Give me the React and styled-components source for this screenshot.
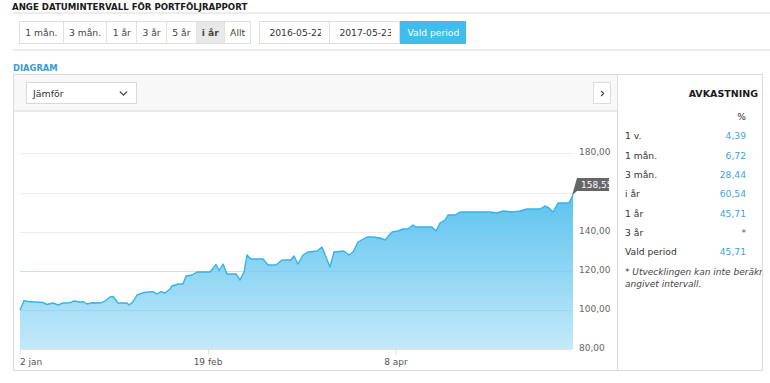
import React from "react";
import styled, { createGlobalStyle } from "styled-components";
import { ChevronDown, ChevronRight } from "lucide-react";

const Global = createGlobalStyle`
  html, body { margin: 0; padding: 0; background: #fff; }
  body { font-family: "DejaVu Sans", Verdana, sans-serif; color: #333; }
  * { box-sizing: border-box; }
`;

const Page = styled.div`
  width: 770px;
  height: 383px;
  overflow: hidden;
  padding-left: 12px;
`;

const Title = styled.h1`
  margin: 0;
  height: 12px;
  line-height: 14px;
  font-size: 8.6px;
  font-weight: bold;
  color: #1a1a1a;
  white-space: nowrap;
`;

const TopBand = styled.div`
  margin-left: 1px;
  border-top: 2px solid #ececec;
  border-bottom: 2px solid #ececec;
  padding: 7px 6px 5px;
  display: flex;
  gap: 8px;
  align-items: stretch;
`;

const Segments = styled.div`
  display: flex;
  height: 23px;
  border: 1px solid #dedede;
  background: #fff;
`;

const Segment = styled.div`
  display: flex;
  align-items: center;
  padding: 0 ${(p) => p.$pad || 5.3}px;
  font-size: 9.2px;
  color: #444;
  border-left: ${(p) => (p.$first ? "none" : "1px solid #e2e2e2")};
  background: ${(p) => (p.$active ? "#e8e8e8" : "#fff")};
  font-weight: ${(p) => (p.$active ? "bold" : "normal")};
  white-space: nowrap;
`;

const Dates = styled.div`
  display: flex;
  height: 23px;
`;

const DateField = styled.div`
  width: ${(p) => p.$w}px;
  height: 23px;
  border: 1px solid #dedede;
  border-left: ${(p) => (p.$first ? "1px solid #dedede" : "none")};
  background: #fff;
  padding: 0 8px 0 9px;
  display: flex;
  align-items: center;
  font-size: 9.2px;
  color: #333;
  & > span {
    overflow: hidden;
    white-space: nowrap;
    display: block;
    width: 100%;
  }
`;

const PrimaryButton = styled.div`
  width: 66px;
  height: 23px;
  background: #3fbeee;
  color: #fff;
  font-size: 9.2px;
  display: flex;
  align-items: center;
  justify-content: center;
  white-space: nowrap;
`;

const SectionLabel = styled.div`
  margin: 12px 0 0 1px;
  height: 11px;
  line-height: 11px;
  font-size: 8.4px;
  font-weight: bold;
  color: #3a9ad9;
`;

const MainRow = styled.div`
  display: flex;
  height: 297px;
  margin-left: 1px;
`;

const ChartPanel = styled.div`
  width: 605px;
  height: 100%;
  border: 1px solid #dcdcdc;
  display: flex;
  flex-direction: column;
`;

const Toolbar = styled.div`
  height: 37px;
  background: #f8f8f8;
  border-bottom: 2px solid #e9e9e9;
  padding: 7px 6px 0 12px;
  display: flex;
  justify-content: space-between;
  align-items: flex-start;
`;

const Select = styled.div`
  width: 111px;
  height: 22px;
  border: 1px solid #d9d9d9;
  background: #fff;
  padding: 0 6px 0 6px;
  display: flex;
  align-items: center;
  justify-content: space-between;
  font-size: 9.4px;
  color: #333;
`;

const NavButton = styled.div`
  width: 18px;
  height: 22px;
  border: 1px solid #dcdcdc;
  background: #fff;
  display: flex;
  align-items: center;
  justify-content: center;
  color: #444;
`;

const ChartSvg = styled.svg`
  display: block;
  flex: none;
`;

const SidePanel = styled.div`
  width: 145px;
  height: 100%;
  border: 1px solid #dcdcdc;
  border-left: none;
  background: #fff;
  padding-top: 13px;
  overflow: hidden;
`;

const SideHeading = styled.div`
  text-align: right;
  padding-right: 4px;
  line-height: 12px;
  font-size: 9.5px;
  font-weight: bold;
  color: #1a1a1a;
  margin-bottom: 7px;
`;

const StatRow = styled.div`
  height: 19.3px;
  display: flex;
  align-items: center;
  justify-content: space-between;
  padding: 0 16px 0 7px;
  font-size: 9.2px;
  color: #333;
  white-space: nowrap;
`;

const StatValue = styled.span`
  color: ${(p) => (p.$muted ? "#555" : "#3ea5de")};
`;

const Footnote = styled.div`
  margin-top: 6px;
  padding-left: 7px;
  font-size: 9px;
  font-style: italic;
  line-height: 11.5px;
  color: #444;
  white-space: nowrap;
`;

const periods = [
  { label: "1 mån." },
  { label: "3 mån." },
  { label: "1 år" },
  { label: "3 år" },
  { label: "5 år" },
  { label: "i år", active: true, pad: 5 },
  { label: "Allt" },
];

const stats = [
  ["1 v.", "4,39"],
  ["1 mån.", "6,72"],
  ["3 mån.", "28,44"],
  ["i år", "60,54"],
  ["1 år", "45,71"],
  ["3 år", "*", true],
  ["Vald period", "45,71"],
];

const pts = [
  [20, 310], [24, 300.7], [28, 301.5], [35, 302], [43, 302.5], [47, 304.5], [53, 303],
  [58, 305], [63, 303], [70, 302.7], [74, 301], [80, 302], [83, 301.7], [87, 304],
  [92, 302.7], [100, 303], [104, 301.7], [110, 297], [113, 296.5], [118, 303], [127, 303],
  [129, 305], [133, 301.7], [137, 295], [143, 292.7], [148, 292], [153, 291.7], [157, 294],
  [161, 291.7], [165, 293], [170, 289], [172, 286], [178, 284], [183, 284], [186, 276],
  [192, 275], [197, 272], [210, 272], [216, 264.5], [219, 270.5], [223, 264], [227, 274],
  [236, 274], [240, 280], [244, 272], [247, 255], [251, 259], [263, 259], [268, 265],
  [276, 265], [282, 260], [291, 260], [294, 256], [298, 264], [303, 255], [308, 252],
  [317, 251], [322, 247], [330, 267], [334, 252], [344, 251], [349, 255], [353, 252],
  [358, 242], [367, 237], [373, 237], [380, 238], [385, 240], [392, 232], [398, 231],
  [403, 229], [408, 229], [413, 225], [416, 227], [432, 227], [436, 231], [440, 223],
  [445, 220], [448, 215], [455, 215], [460, 212], [480, 212], [490, 212], [497, 213],
  [503, 211], [513, 212], [520, 211], [527, 209], [540, 209], [545, 206], [549, 208],
  [553, 212], [558, 203], [569, 203], [573, 195],
];

const linePath = pts.map((p, i) => `${i ? "L" : "M"}${p[0]} ${p[1]}`).join(" ");
const areaPath = `${linePath} L573 349 L20 349 Z`;

const grid = [
  { y: 153, label: "180,00" },
  { y: 193, label: null },
  { y: 232, label: "140,00" },
  { y: 271, label: "120,00" },
  { y: 310, label: "100,00" },
  { y: 349, label: "80,00" },
];

const xTicks = [
  { x: 20, label: "2 jan", anchor: "start" },
  { x: 208, label: "19 feb", anchor: "middle" },
  { x: 396, label: "8 apr", anchor: "middle" },
];

function Chart() {
  return (
    <ChartSvg width="603" height="258" viewBox="14 112 603 258">
      <defs>
        <linearGradient id="fillGrad" x1="0" y1="195" x2="0" y2="349" gradientUnits="userSpaceOnUse">
          <stop offset="0" stopColor="#5dc3ef" />
          <stop offset="1" stopColor="#c3e9f9" />
        </linearGradient>
        <clipPath id="flagClip">
          <rect x="560" y="170" width="49" height="30" />
        </clipPath>
      </defs>
      {grid.slice(0, 5).map((g) => (
        <line key={g.y} x1="20" x2="573" y1={g.y + 0.5} y2={g.y + 0.5} stroke="#ededed" strokeWidth="1" />
      ))}
      <path d={areaPath} fill="url(#fillGrad)" />
      {grid.slice(3, 5).map((g) => (
        <line key={"o" + g.y} x1="20" x2="573" y1={g.y + 0.5} y2={g.y + 0.5} stroke="#5fbde6" strokeOpacity="0.25" strokeWidth="1" />
      ))}
      <path d={linePath} fill="none" stroke="#38b2ea" strokeWidth="1.4" strokeLinejoin="round" />
      <line x1="20" x2="573" y1="349.5" y2="349.5" stroke="#e2e2e2" strokeWidth="1" />
      {xTicks.map((t) => (
        <line key={t.x} x1={t.x + 0.5} x2={t.x + 0.5} y1="349" y2="354" stroke="#e2e2e2" strokeWidth="1" />
      ))}
      {xTicks.map((t) => (
        <text key={"l" + t.x} x={t.x} y="365" fontSize="9" fill="#555" textAnchor={t.anchor} fontFamily="DejaVu Sans, sans-serif">
          {t.label}
        </text>
      ))}
      {grid.filter((g) => g.label).map((g) => (
        <text key={"y" + g.y} x="579" y={g.y + 1.5} fontSize="9" fill="#666" fontFamily="DejaVu Sans, sans-serif">
          {g.label}
        </text>
      ))}
      <g clipPath="url(#flagClip)">
        <polygon points="572,195.5 577,178 612,178 612,191 577,191" fill="#666" />
        <text x="581" y="188" fontSize="9" fill="#fff" fontFamily="DejaVu Sans, sans-serif">158,55</text>
      </g>
    </ChartSvg>
  );
}

export default function App() {
  return (
    <>
      <Global />
      <Page>
        <Title>ANGE DATUMINTERVALL FÖR PORTFÖLJRAPPORT</Title>
        <TopBand>
          <Segments>
            {periods.map((p, i) => (
              <Segment key={p.label} $first={i === 0} $active={p.active} $pad={p.pad}>
                {p.label}
              </Segment>
            ))}
          </Segments>
          <Dates>
            <DateField $w={71} $first>
              <span>2016-05-22</span>
            </DateField>
            <DateField $w={70}>
              <span>2017-05-23</span>
            </DateField>
            <PrimaryButton>Vald period</PrimaryButton>
          </Dates>
        </TopBand>
        <SectionLabel>DIAGRAM</SectionLabel>
        <MainRow>
          <ChartPanel>
            <Toolbar>
              <Select>
                <span>Jämför</span>
                <ChevronDown size={13} strokeWidth={2.6} color="#444" />
              </Select>
              <NavButton>
                <ChevronRight size={9} strokeWidth={3} />
              </NavButton>
            </Toolbar>
            <Chart />
          </ChartPanel>
          <SidePanel>
            <SideHeading>AVKASTNING</SideHeading>
            <StatRow>
              <span />
              <span>%</span>
            </StatRow>
            {stats.map(([label, value, muted]) => (
              <StatRow key={label}>
                <span>{label}</span>
                <StatValue $muted={muted}>{value}</StatValue>
              </StatRow>
            ))}
            <Footnote>
              * Utvecklingen kan inte beräknas för
              <br />
              angivet intervall.
            </Footnote>
          </SidePanel>
        </MainRow>
      </Page>
    </>
  );
}
